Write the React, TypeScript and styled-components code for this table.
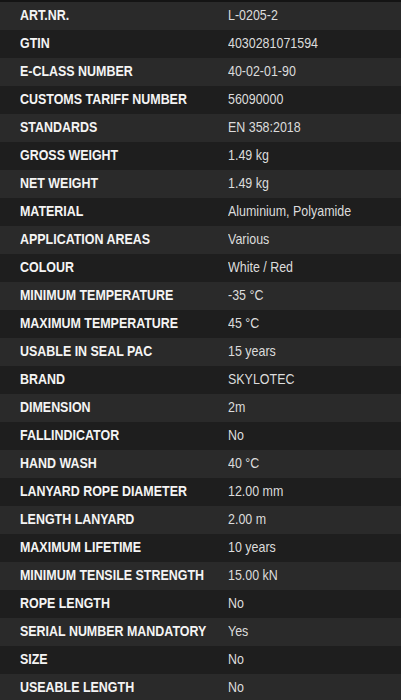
import styled, { createGlobalStyle } from "styled-components";

const GlobalStyle = createGlobalStyle`
  html, body {
    margin: 0;
    padding: 0;
    background: #141414;
  }
`;

const specs: [string, string][] = [
  ["ART.NR.", "L-0205-2"],
  ["GTIN", "4030281071594"],
  ["E-CLASS NUMBER", "40-02-01-90"],
  ["CUSTOMS TARIFF NUMBER", "56090000"],
  ["STANDARDS", "EN 358:2018"],
  ["GROSS WEIGHT", "1.49 kg"],
  ["NET WEIGHT", "1.49 kg"],
  ["MATERIAL", "Aluminium, Polyamide"],
  ["APPLICATION AREAS", "Various"],
  ["COLOUR", "White / Red"],
  ["MINIMUM TEMPERATURE", "-35 °C"],
  ["MAXIMUM TEMPERATURE", "45 °C"],
  ["USABLE IN SEAL PAC", "15 years"],
  ["BRAND", "SKYLOTEC"],
  ["DIMENSION", "2m"],
  ["FALLINDICATOR", "No"],
  ["HAND WASH", "40 °C"],
  ["LANYARD ROPE DIAMETER", "12.00 mm"],
  ["LENGTH LANYARD", "2.00 m"],
  ["MAXIMUM LIFETIME", "10 years"],
  ["MINIMUM TENSILE STRENGTH", "15.00 kN"],
  ["ROPE LENGTH", "No"],
  ["SERIAL NUMBER MANDATORY", "Yes"],
  ["SIZE", "No"],
  ["USEABLE LENGTH", "No"],
];

const Wrapper = styled.div`
  padding-top: 2px;
  background: #141414;
`;

const SpecTable = styled.div`
  display: flex;
  flex-direction: column;
`;

const Row = styled.div<{ $odd: boolean }>`
  box-sizing: border-box;
  display: grid;
  grid-template-columns: 208px 1fr;
  height: 28px;
  align-items: center;
  padding: 0 0 2px 20px;
  background: ${(p) => (p.$odd ? "#1e1e1e" : "#2a2a2a")};
`;

// no condensed face installed, so squeeze Liberation Sans to a narrow width
const Cell = styled.div`
  white-space: nowrap;
  line-height: 26px;

  & span {
    display: inline-block;
    font-family: "Liberation Sans", Arial, sans-serif;
    font-size: 15px;
    transform: scaleX(0.83);
    transform-origin: left center;
  }
`;

const Label = styled(Cell)`
  & span {
    font-weight: 700;
    color: #f4f4f4;
  }
`;

const Value = styled(Cell)`
  & span {
    font-weight: 400;
    color: #dcdcdc;
  }
`;

export default function App() {
  return (
    <>
      <GlobalStyle />
      <Wrapper>
        <SpecTable>
          {specs.map(([label, value], i) => (
            <Row key={label} $odd={i % 2 === 1}>
              <Label>
                <span>{label}</span>
              </Label>
              <Value>
                <span>{value}</span>
              </Value>
            </Row>
          ))}
        </SpecTable>
      </Wrapper>
    </>
  );
}
